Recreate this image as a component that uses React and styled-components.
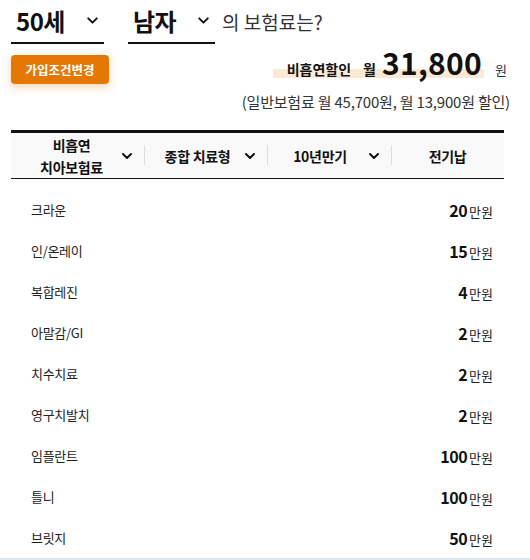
import React from "react";
import styled, { createGlobalStyle } from "styled-components";

const GlobalStyle = createGlobalStyle`
  body {
    margin: 0;
    background: #fff;
    font-family: "Noto Sans CJK KR", "Noto Sans", sans-serif;
    color: #111;
  }
`;

const Page = styled.div`
  width: 530px;
  height: 560px;
  overflow: hidden;
  box-sizing: border-box;
  padding: 0 26px 0 11px;
`;

const Head = styled.div`
  display: flex;
  align-items: center;
  height: 44px;
`;

const Picker = styled.div`
  display: flex;
  align-items: center;
  justify-content: space-between;
  box-sizing: border-box;
  width: ${(p) => p.w}px;
  height: 44px;
  padding: 0 4px 2px 5px;
  margin-right: ${(p) => p.gap || 0}px;
  border-bottom: 2px solid #111;
  font-size: 24px;
  font-weight: 700;
  letter-spacing: -0.5px;
`;

const Question = styled.span`
  font-size: 19px;
  color: #333;
  margin-left: 7px;
  margin-top: -2px;
`;

const PriceRow = styled.div`
  display: flex;
  align-items: flex-start;
  justify-content: space-between;
  margin-top: 11px;
`;

const ChangeButton = styled.button`
  width: 98px;
  height: 29px;
  border: 0;
  border-radius: 4px;
  background: #e57703;
  color: #fff;
  font-family: inherit;
  font-size: 12.5px;
  font-weight: 700;
  box-shadow: 0 3px 10px rgba(235, 130, 30, 0.35);
  padding: 0;
`;

const Price = styled.div`
  display: flex;
  align-items: baseline;
  margin-top: -8px;
  margin-right: -3px;
`;

const Marked = styled.span`
  display: inline-flex;
  align-items: baseline;
  padding: 0 2px 0 14px;
  background: linear-gradient(to bottom, transparent 68%, #fbe9d4 68%, #fbe9d4 98%, transparent 98%);
`;

const Label = styled.span`
  font-size: 14px;
  font-weight: 700;
  margin-right: ${(p) => p.gap || 0}px;
`;

const Amount = styled.span`
  font-size: 30px;
  line-height: 1;
  font-weight: 700;
  letter-spacing: 0.3px;
`;

const Won = styled.span`
  font-size: 13px;
  margin-left: 11px;
  color: #333;
`;

const Note = styled.div`
  text-align: right;
  font-size: 15px;
  color: #333;
  margin-top: 7px;
  margin-right: -6px;
  letter-spacing: -0.2px;
`;

const Table = styled.div`
  margin-top: 18px;
  border-top: 3px solid #111;
`;

const HeadRow = styled.div`
  display: grid;
  grid-template-columns: 133px 123px 124px 1fr;
  height: 45px;
  background: #f9f9f9;
  border-bottom: 1px solid #111;
`;

const HeadCell = styled.div`
  position: relative;
  display: flex;
  align-items: center;
  padding-right: ${(p) => (p.arrow ? 10 : 0)}px;
  font-size: 14px;
  font-weight: 700;
  line-height: 22px;
  letter-spacing: -0.3px;
  &:not(:first-child)::before {
    content: "";
    position: absolute;
    left: 0;
    top: 12px;
    height: 20px;
    border-left: 1px solid #dcdcdc;
  }
`;

const HeadText = styled.span`
  flex: 1;
  text-align: center;
  padding-left: ${(p) => p.shift || 0}px;
`;

const Body = styled.div`
  padding-top: 10px;
`;

const Row = styled.div`
  display: flex;
  align-items: center;
  justify-content: space-between;
  height: 41px;
  padding: 0 11px 0 20px;
`;

const Item = styled.span`
  font-size: 13px;
  color: #222;
  letter-spacing: -0.3px;
`;

const Value = styled.span`
  display: flex;
  align-items: baseline;
`;

const Num = styled.b`
  font-size: 16px;
  font-weight: 700;
  margin-right: 2px;
  letter-spacing: -0.5px;
`;

const Unit = styled.span`
  font-size: 13px;
  color: #222;
`;

const Strip = styled.div`
  height: 10px;
  margin: 0 -26px 0 -11px;
  background: #dfe7ee;
`;

const Chevron = ({ size = 14, w = 2 }) => (
  <svg width={size} height={size} viewBox="0 0 14 14" fill="none">
    <path d="M3 5l4 4 4-4" stroke="#111" strokeWidth={w} strokeLinecap="round" strokeLinejoin="round" />
  </svg>
);

const rows = [
  ["크라운", "20"],
  ["인/온레이", "15"],
  ["복합레진", "4"],
  ["아말감/GI", "2"],
  ["치수치료", "2"],
  ["영구치발치", "2"],
  ["임플란트", "100"],
  ["틀니", "100"],
  ["브릿지", "50"],
];

const App = () => (
  <>
    <GlobalStyle />
    <Page>
      <Head>
        <Picker w={93} gap={24}>
          50세 <Chevron size={15} w={1.8} />
        </Picker>
        <Picker w={87}>
          남자 <Chevron size={15} w={1.8} />
        </Picker>
        <Question>의 보험료는?</Question>
      </Head>
      <PriceRow>
        <ChangeButton>가입조건변경</ChangeButton>
        <Price>
          <Marked>
            <Label gap={12}>비흡연할인</Label>
            <Label gap={6}>월</Label>
            <Amount>31,800</Amount>
          </Marked>
          <Won>원</Won>
        </Price>
      </PriceRow>
      <Note>(일반보험료 월 45,700원, 월 13,900원 할인)</Note>
      <Table>
        <HeadRow>
          <HeadCell arrow>
            <HeadText shift={12}>
              비흡연
              <br />
              치아보험료
            </HeadText>
            <Chevron />
          </HeadCell>
          <HeadCell arrow>
            <HeadText shift={8}>종합 치료형</HeadText>
            <Chevron />
          </HeadCell>
          <HeadCell arrow>
            <HeadText shift={6}>10년만기</HeadText>
            <Chevron />
          </HeadCell>
          <HeadCell>
            <HeadText>전기납</HeadText>
          </HeadCell>
        </HeadRow>
        <Body>
          {rows.map(([name, amount]) => (
            <Row key={name}>
              <Item>{name}</Item>
              <Value>
                <Num>{amount}</Num>
                <Unit>만원</Unit>
              </Value>
            </Row>
          ))}
        </Body>
      </Table>
      <Strip />
    </Page>
  </>
);

export default App;
